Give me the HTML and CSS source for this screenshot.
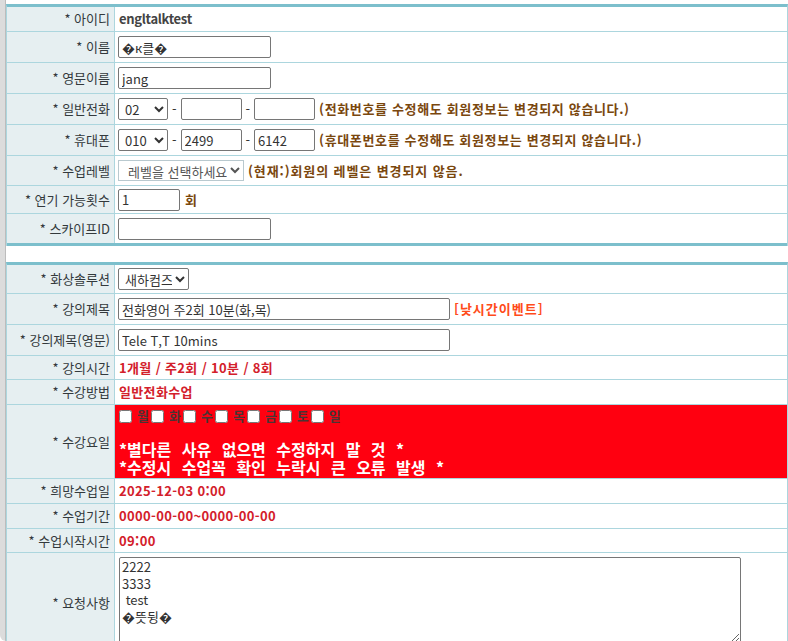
FILE: index.html
```html
<!DOCTYPE html>
<html lang="ko">
<head>
<meta charset="utf-8">
<title>회원정보</title>
<link rel="stylesheet" href="styles.css">
</head>
<body>
<div class="frame">
  <div class="side"></div>
  <div class="main">
    <div class="form">
      <div class="row h24"><div class="lab">* 아이디</div><div class="val"><b class="id">engltalktest</b></div></div>
      <div class="row h30"><div class="lab">* 이름</div><div class="val"><input class="txt w152" type="text" value="�к클�"></div></div>
      <div class="row h30"><div class="lab">* 영문이름</div><div class="val"><input class="txt w152" type="text" value="jang"></div></div>
      <div class="row h30"><div class="lab">* 일반전화</div><div class="val">
        <select class="sel w50"><option>02</option></select><span class="dash">-</span><input class="txt w61" type="text" value=""><span class="dash">-</span><input class="txt w61" type="text" value=""><span class="note">(전화번호를 수정해도 회원정보는 변경되지 않습니다.)</span>
      </div></div>
      <div class="row h30"><div class="lab">* 휴대폰</div><div class="val">
        <select class="sel w50"><option>010</option></select><span class="dash">-</span><input class="txt w61" type="text" value="2499"><span class="dash">-</span><input class="txt w61" type="text" value="6142"><span class="note">(휴대폰번호를 수정해도 회원정보는 변경되지 않습니다.)</span>
      </div></div>
      <div class="row h29"><div class="lab">* 수업레벨</div><div class="val">
        <select class="sel light w126"><option>레벨을 선택하세요</option></select><span class="note n2">(현재:)회원의 레벨은 변경되지 않음.</span>
      </div></div>
      <div class="row h27"><div class="lab">* 연기 가능횟수</div><div class="val"><input class="txt w62" type="text" value="1"><span class="note n3">회</span></div></div>
      <div class="row h29 last"><div class="lab">* 스카이프ID</div><div class="val"><input class="txt w152" type="text" value=""></div></div>
    </div>

    <div class="form second">
      <div class="row h28"><div class="lab">* 화상솔루션</div><div class="val"><select class="sel w71"><option>새하컴즈</option></select></div></div>
      <div class="row h30"><div class="lab">* 강의제목</div><div class="val"><input class="txt w332" type="text" value="전화영어 주2회 10분(화,목)"><span class="event">[낮시간이벤트]</span></div></div>
      <div class="row h30"><div class="lab">* 강의제목(영문)</div><div class="val"><input class="txt w332" type="text" value="Tele T,T 10mins"></div></div>
      <div class="row h23"><div class="lab">* 강의시간</div><div class="val"><b class="red">1개월 / 주2회 / 10분 / 8회</b></div></div>
      <div class="row h24"><div class="lab">* 수강방법</div><div class="val"><b class="red">일반전화수업</b></div></div>
      <div class="row h73"><div class="lab">* 수강요일</div><div class="val warn">
        <div class="days">
          <label class="day"><input type="checkbox">월</label>
          <label class="day"><input type="checkbox">화</label>
          <label class="day"><input type="checkbox">수</label>
          <label class="day"><input type="checkbox">목</label>
          <label class="day"><input type="checkbox">금</label>
          <label class="day"><input type="checkbox">토</label>
          <label class="day"><input type="checkbox">일</label>
        </div>
        <div class="alert">
          <div class="line">*별다른 사유 없으면 수정하지 말 것 *</div>
          <div class="line">*수정시 수업꼭 확인 누락시 큰 오류 발생 *</div>
        </div>
      </div></div>
      <div class="row h24"><div class="lab">* 희망수업일</div><div class="val"><b class="red">2025-12-03 0:00</b></div></div>
      <div class="row h24"><div class="lab">* 수업기간</div><div class="val"><b class="red">0000-00-00~0000-00-00</b></div></div>
      <div class="row h23"><div class="lab">* 수업시작시간</div><div class="val"><b class="red">09:00</b></div></div>
      <div class="row tall"><div class="lab">* 요청사항</div><div class="val top"><textarea class="memo">2222
3333
 test
�뜻뒹�</textarea></div></div>
    </div>
  </div>
</div>
</body>
</html>
```

FILE: styles.css
```css
html, body {
  margin: 0;
  padding: 0;
  background: #ffffff;
  overflow: hidden;
}

body {
  font-family: "Noto Sans CJK KR", "Noto Sans", sans-serif;
  font-size: 13px;
  color: #333333;
}

.frame {
  display: flex;
  width: 788px;
  height: 641px;
}

.side {
  flex: none;
  width: 5px;
  background: #dcdcdc;
  border-right: 1px solid #bcbcbc;
  border-bottom-left-radius: 6px;
}

.main {
  flex: none;
  width: 782px;
  padding-top: 4px;
  overflow: hidden;
}

.form {
  border-top: 3px solid #7cbfcc;
  border-left: 1px solid #acd6de;
  border-right: 1px solid #acd6de;
}

.form.second {
  margin-top: 16px;
}

.row {
  display: grid;
  grid-template-columns: 108px 1fr;
  border-bottom: 1px solid #acd6de;
}

.row.last {
  border-bottom: 3px solid #7cbfcc;
}

.h23 { height: 23px; }
.h24 { height: 24px; }
.h27 { height: 27px; }
.h28 { height: 28px; }
.h29 { height: 29px; }
.h30 { height: 30px; }
.h73 { height: 73px; overflow: hidden; }
.tall { height: 100px; }

.lab {
  background: #e6eff1;
  border-right: 1px solid #acd6de;
  display: flex;
  align-items: center;
  justify-content: flex-end;
  padding-right: 4px;
  white-space: nowrap;
  color: #33393c;
  line-height: 16px;
}

.val {
  display: flex;
  align-items: center;
  padding-left: 3px;
  white-space: nowrap;
  line-height: 16px;
}

.val.top {
  align-items: flex-start;
  padding-top: 4px;
}

.id {
  color: #444444;
  padding-left: 1px;
  letter-spacing: -0.3px;
}

.txt {
  box-sizing: border-box;
  height: 22px;
  border: 1px solid #767676;
  border-radius: 2px;
  padding: 0 3px;
  font-family: "Noto Sans CJK KR", "Noto Sans", sans-serif;
  font-size: 13px;
  color: #333333;
  background: #ffffff;
  margin: 0;
}

.w152 { width: 153px; }
.w61 { width: 61px; }
.w62 { width: 62px; }
.w332 { width: 332px; }

.sel {
  box-sizing: border-box;
  height: 22px;
  border: 1px solid #767676;
  border-radius: 2px;
  font-family: "Noto Sans CJK KR", "Noto Sans", sans-serif;
  font-size: 13px;
  color: #333333;
  background: #ffffff;
  margin: 0;
  padding: 0 0 0 2px;
}

.sel.light {
  border: 1px solid #b9c9cf;
  border-radius: 0;
  height: 21px;
  color: #555555;
  padding-left: 5px;
}

.w50 { width: 50px; }
.w71 { width: 71px; }
.w126 { width: 126px; }

.dash {
  padding: 0 4px;
  color: #333333;
}

.note {
  margin-left: 4px;
  font-weight: bold;
  color: #7a470e;
  letter-spacing: 0.65px;
}

.note.n2 { margin-left: 4px; letter-spacing: 0.9px; }
.note.n3 { margin-left: 5px; }

.event {
  margin-left: 4px;
  font-weight: bold;
  color: #ff4b1a;
  letter-spacing: 1px;
}

.red {
  color: #d3202b;
  padding-left: 1px;
  letter-spacing: 0.35px;
}

.val.warn {
  background: #ff0010;
  flex-direction: column;
  align-items: flex-start;
  justify-content: flex-start;
  padding-left: 4px;
  padding-top: 3px;
}

.days {
  display: flex;
  align-items: center;
  height: 16px;
}

.day {
  display: flex;
  align-items: center;
  font-weight: bold;
  color: #4a3434;
  margin-right: 2px;
}

.day input {
  width: 13px;
  height: 13px;
  margin: 0 5px 0 0;
}

.alert {
  margin-top: 16px;
  color: #ffffff;
  font-weight: bold;
  font-size: 16px;
  word-spacing: 6px;
}

.alert .line {
  height: 18px;
  line-height: 18px;
}

.memo {
  box-sizing: border-box;
  width: 622px;
  height: 86px;
  margin: 0 0 0 1px;
  border: 1px solid #767676;
  border-radius: 2px;
  padding: 1px 2px;
  font-family: "Noto Sans CJK KR", "Noto Sans", sans-serif;
  font-size: 13px;
  line-height: 16.5px;
  color: #333333;
  resize: both;
}
```
